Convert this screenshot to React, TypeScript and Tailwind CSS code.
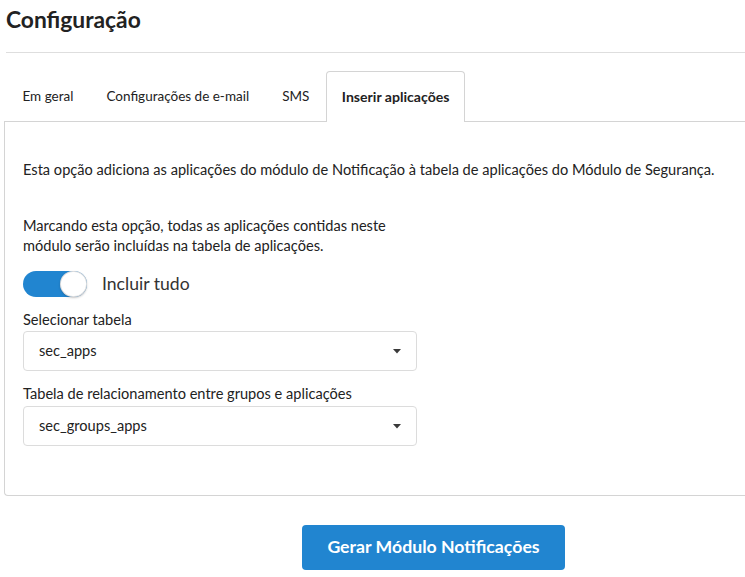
import React from 'react';

const tabs = ['Em geral', 'Configurações de e-mail', 'SMS', 'Inserir aplicações'];

function Caret() {
  return (
    <svg width="8" height="5" viewBox="0 0 8 5" className="shrink-0">
      <path d="M0 0 H8 L4 4.5 Z" fill="#3a3a3a" />
    </svg>
  );
}

function SelectBox({ value }: { value: string }) {
  return (
    <div className="flex h-[40px] w-[394px] items-center justify-between rounded-[4px] border border-[#dcdcdc] pl-[15px] pr-[15px] text-[14.6px] text-[#222]">
      <span>{value}</span>
      <Caret />
    </div>
  );
}

export default function App() {
  return (
    <div className="w-full overflow-hidden bg-white font-['Lato',sans-serif] text-[#222]">
      <div className="w-[867px] pl-[4px]">
        <h1 className="pl-[2px] pt-[5px] text-[22.8px] font-bold leading-[28px] text-[#222]">Configuração</h1>
        <div className="ml-[2px] mt-[19px] border-t border-[#dedede]" />

        <div className="mt-[18px] flex pl-[2px]">
          {tabs.map((t, i) => {
            const active = i === tabs.length - 1;
            return (
              <div
                key={t}
                className={
                  active
                    ? 'relative z-10 -mb-px flex h-[51px] items-center rounded-t-[4px] border border-b-0 border-[#d4d4d4] bg-white px-[15px] text-[14.1px] font-bold'
                    : 'flex h-[50px] items-center px-[16.5px] text-[13.5px]'
                }
              >
                {t}
              </div>
            );
          })}
        </div>

        <div className="rounded-bl-[4px] border border-r-0 border-[#d4d4d4] pb-[49px] pl-[18px] pt-[38px] text-[14.6px] leading-[20px]">
          <p>Esta opção adiciona as aplicações do módulo de Notificação à tabela de aplicações do Módulo de Segurança.</p>
          <p className="mt-[36px] w-[380px]">
            Marcando esta opção, todas as aplicações contidas neste módulo serão incluídas na tabela de aplicações.
          </p>

          <div className="mt-[15px] flex items-center">
            <div className="relative h-[26px] w-[64px] rounded-full bg-[#2185d0]">
              <div className="absolute right-0 top-0 h-[26px] w-[27px] rounded-full bg-white shadow-[0_1px_2px_rgba(34,36,38,0.25),inset_0_0_0_1px_rgba(34,36,38,0.15)]" />
            </div>
            <span className="ml-[15px] text-[17.6px] text-[#333]">Incluir tudo</span>
          </div>

          <label className="mt-[13px] block">Selecionar tabela</label>
          <div className="mt-[1px]">
            <SelectBox value="sec_apps" />
          </div>

          <label className="mt-[13px] block">Tabela de relacionamento entre grupos e aplicações</label>
          <div className="mt-[2px]">
            <SelectBox value="sec_groups_apps" />
          </div>
        </div>

        <div className="mt-[29px] flex pl-[298px]">
          <button className="h-[45px] w-[263px] rounded-[4px] bg-[#2185d0] text-[17.7px] font-bold text-white">
            Gerar Módulo Notificações
          </button>
        </div>
      </div>
    </div>
  );
}
